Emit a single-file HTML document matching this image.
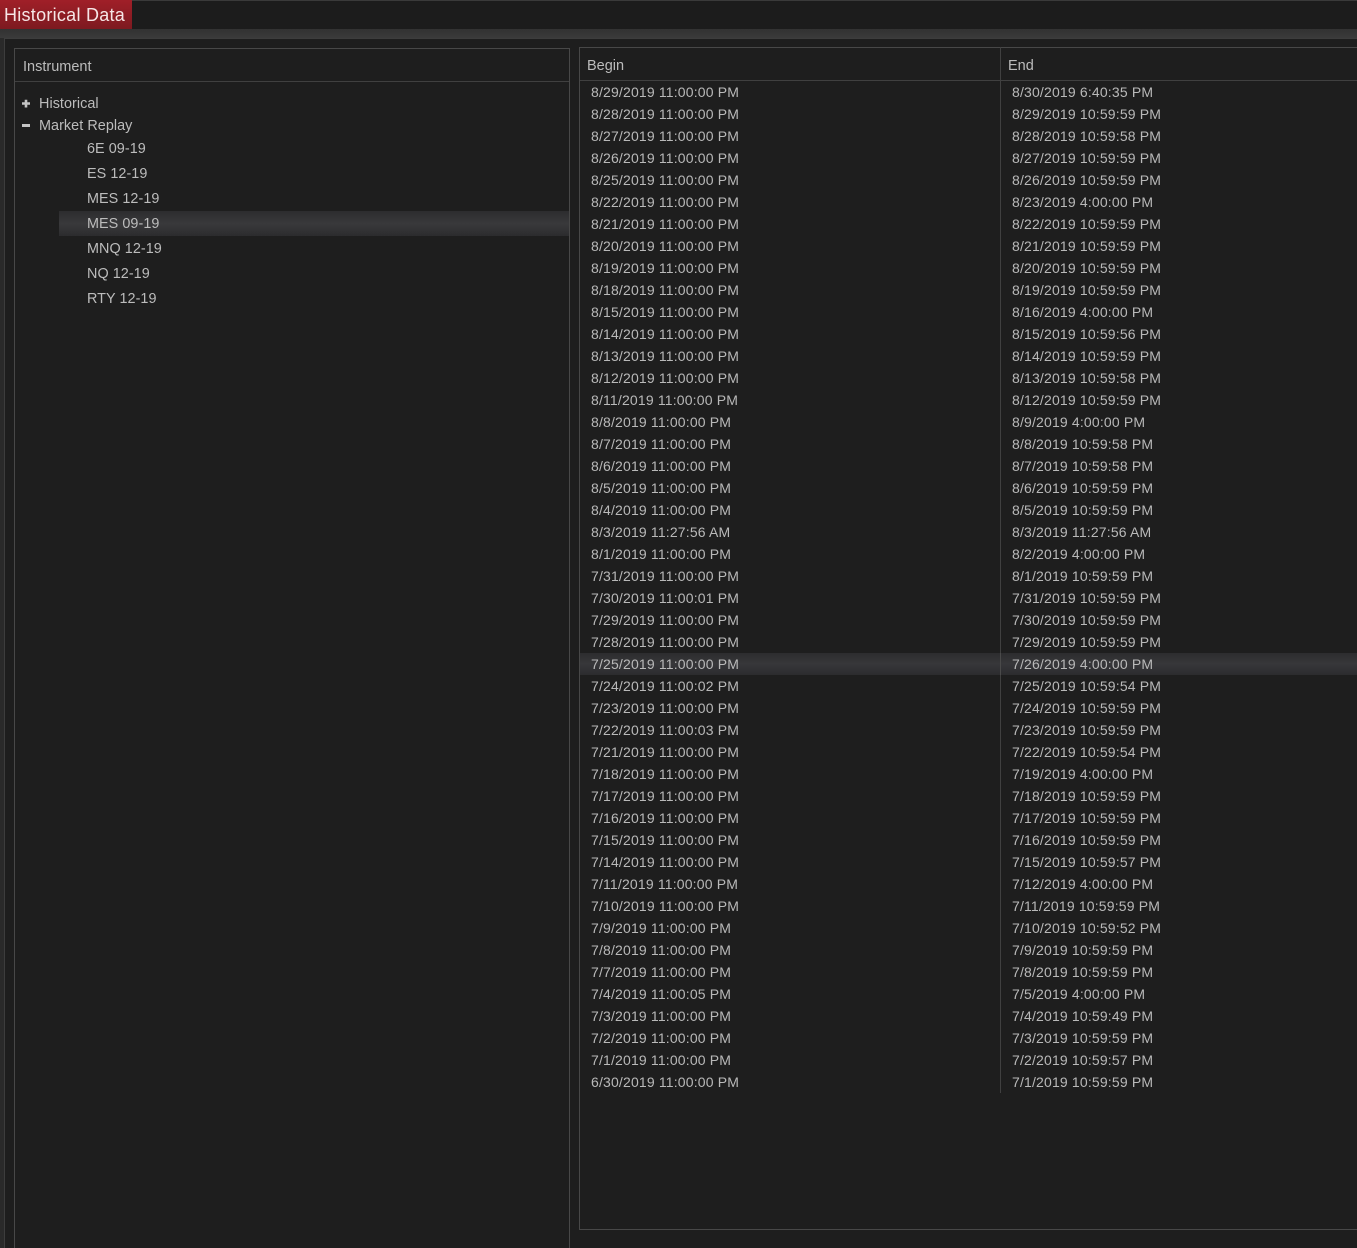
<!DOCTYPE html>
<html><head><meta charset="utf-8">
<style>
html,body{margin:0;padding:0;background:#1e1e1e}
#p{position:relative;width:1357px;height:1248px;overflow:hidden;background:#1e1e1e;font-family:"Liberation Sans",Arial,sans-serif;font-size:14px;color:#b9b9b9}
#p div{position:absolute}
.r{left:579px;width:778px;height:22px;line-height:22px;white-space:nowrap;letter-spacing:.17px}
.r span{position:absolute;top:0}
.r span:first-child{left:12px}
.r span:last-child{left:433px}
.t{left:87px;height:25px;line-height:25px;white-space:nowrap;color:#bcbcbc;font-size:14.4px;letter-spacing:.05px;margin-top:1px}
.h{line-height:22px;white-space:nowrap;color:#bcbcbc;font-size:14.4px;letter-spacing:.05px}
</style></head><body><div id="p">
<div style="left:0;top:0;width:1357px;height:29px;background:#1c1c1c;border-top:1px solid #3a3a3a;box-sizing:border-box"></div>
<div style="left:0;top:0;width:132px;height:29px;background:linear-gradient(#a01f28,#7d1a20);color:#f6e6e6;font-size:18px;line-height:31px;text-indent:4px;letter-spacing:.27px">Historical Data</div>
<div style="left:0;top:29px;width:1357px;height:9px;background:linear-gradient(#323232,#3a3a3a)"></div>
<div style="left:0;top:38px;width:5px;height:1210px;background:#2a2a2a"></div>
<div style="left:4px;top:38px;width:1px;height:1210px;background:#3d3d3d"></div>
<div style="left:5px;top:38px;width:1352px;height:1px;background:#3d3d3d"></div>

<div style="left:14px;top:48px;width:556px;height:1px;background:#484848"></div>
<div style="left:14px;top:48px;width:1px;height:1200px;background:#484848"></div>
<div style="left:569px;top:48px;width:1px;height:1200px;background:#484848"></div>
<div style="left:15px;top:81px;width:554px;height:1px;background:#404040"></div>
<div style="left:23px;top:56px;line-height:22px;color:#bcbcbc;font-size:14.5px">Instrument</div>

<svg style="position:absolute;left:20px;top:97px" width="12" height="13" viewBox="20 97 12 13"><path fill="#c4c4c4" d="M22 102.2h2.7v-2.4h2.6v2.4H30v2.6h-2.7v2.7h-2.6v-2.7H22z"/></svg>
<div class="h" style="left:39px;top:93px">Historical</div>
<div style="left:22px;top:124px;width:8px;height:3px;background:#c4c4c4"></div>
<div class="h" style="left:39px;top:115px">Market Replay</div>
<div style="left:59px;top:211px;width:510px;height:25px;background:linear-gradient(#2c2c2e,#39393b 50%,#2c2c2e)"></div>
<div class="t" style="top:136px">6E 09-19</div>
<div class="t" style="top:161px">ES 12-19</div>
<div class="t" style="top:186px">MES 12-19</div>
<div class="t" style="top:211px">MES 09-19</div>
<div class="t" style="top:236px">MNQ 12-19</div>
<div class="t" style="top:261px">NQ 12-19</div>
<div class="t" style="top:286px">RTY 12-19</div>

<div style="left:579px;top:47px;width:778px;height:1px;background:#484848"></div>
<div style="left:579px;top:47px;width:1px;height:1183px;background:#484848"></div>
<div style="left:579px;top:1229px;width:778px;height:1px;background:#484848"></div>
<div style="left:580px;top:80px;width:777px;height:1px;background:#404040"></div>
<div style="left:1000px;top:47px;width:1px;height:1046px;background:#404040"></div>
<div style="left:587px;top:55px;line-height:22px;color:#bcbcbc;font-size:14.5px">Begin</div>
<div style="left:1008px;top:55px;line-height:22px;color:#bcbcbc;font-size:14.5px">End</div>
<div style="left:580px;top:653px;width:777px;height:22px;background:linear-gradient(#2c2c2e,#37373a 50%,#2c2c2e)"></div>
<div style="left:1000px;top:653px;width:1px;height:22px;background:#4a4a4a"></div>

<div class="r" style="top:81px"><span>8/29/2019 11:00:00 PM</span><span>8/30/2019 6:40:35 PM</span></div>
<div class="r" style="top:103px"><span>8/28/2019 11:00:00 PM</span><span>8/29/2019 10:59:59 PM</span></div>
<div class="r" style="top:125px"><span>8/27/2019 11:00:00 PM</span><span>8/28/2019 10:59:58 PM</span></div>
<div class="r" style="top:147px"><span>8/26/2019 11:00:00 PM</span><span>8/27/2019 10:59:59 PM</span></div>
<div class="r" style="top:169px"><span>8/25/2019 11:00:00 PM</span><span>8/26/2019 10:59:59 PM</span></div>
<div class="r" style="top:191px"><span>8/22/2019 11:00:00 PM</span><span>8/23/2019 4:00:00 PM</span></div>
<div class="r" style="top:213px"><span>8/21/2019 11:00:00 PM</span><span>8/22/2019 10:59:59 PM</span></div>
<div class="r" style="top:235px"><span>8/20/2019 11:00:00 PM</span><span>8/21/2019 10:59:59 PM</span></div>
<div class="r" style="top:257px"><span>8/19/2019 11:00:00 PM</span><span>8/20/2019 10:59:59 PM</span></div>
<div class="r" style="top:279px"><span>8/18/2019 11:00:00 PM</span><span>8/19/2019 10:59:59 PM</span></div>
<div class="r" style="top:301px"><span>8/15/2019 11:00:00 PM</span><span>8/16/2019 4:00:00 PM</span></div>
<div class="r" style="top:323px"><span>8/14/2019 11:00:00 PM</span><span>8/15/2019 10:59:56 PM</span></div>
<div class="r" style="top:345px"><span>8/13/2019 11:00:00 PM</span><span>8/14/2019 10:59:59 PM</span></div>
<div class="r" style="top:367px"><span>8/12/2019 11:00:00 PM</span><span>8/13/2019 10:59:58 PM</span></div>
<div class="r" style="top:389px"><span>8/11/2019 11:00:00 PM</span><span>8/12/2019 10:59:59 PM</span></div>
<div class="r" style="top:411px"><span>8/8/2019 11:00:00 PM</span><span>8/9/2019 4:00:00 PM</span></div>
<div class="r" style="top:433px"><span>8/7/2019 11:00:00 PM</span><span>8/8/2019 10:59:58 PM</span></div>
<div class="r" style="top:455px"><span>8/6/2019 11:00:00 PM</span><span>8/7/2019 10:59:58 PM</span></div>
<div class="r" style="top:477px"><span>8/5/2019 11:00:00 PM</span><span>8/6/2019 10:59:59 PM</span></div>
<div class="r" style="top:499px"><span>8/4/2019 11:00:00 PM</span><span>8/5/2019 10:59:59 PM</span></div>
<div class="r" style="top:521px"><span>8/3/2019 11:27:56 AM</span><span>8/3/2019 11:27:56 AM</span></div>
<div class="r" style="top:543px"><span>8/1/2019 11:00:00 PM</span><span>8/2/2019 4:00:00 PM</span></div>
<div class="r" style="top:565px"><span>7/31/2019 11:00:00 PM</span><span>8/1/2019 10:59:59 PM</span></div>
<div class="r" style="top:587px"><span>7/30/2019 11:00:01 PM</span><span>7/31/2019 10:59:59 PM</span></div>
<div class="r" style="top:609px"><span>7/29/2019 11:00:00 PM</span><span>7/30/2019 10:59:59 PM</span></div>
<div class="r" style="top:631px"><span>7/28/2019 11:00:00 PM</span><span>7/29/2019 10:59:59 PM</span></div>
<div class="r" style="top:653px"><span>7/25/2019 11:00:00 PM</span><span>7/26/2019 4:00:00 PM</span></div>
<div class="r" style="top:675px"><span>7/24/2019 11:00:02 PM</span><span>7/25/2019 10:59:54 PM</span></div>
<div class="r" style="top:697px"><span>7/23/2019 11:00:00 PM</span><span>7/24/2019 10:59:59 PM</span></div>
<div class="r" style="top:719px"><span>7/22/2019 11:00:03 PM</span><span>7/23/2019 10:59:59 PM</span></div>
<div class="r" style="top:741px"><span>7/21/2019 11:00:00 PM</span><span>7/22/2019 10:59:54 PM</span></div>
<div class="r" style="top:763px"><span>7/18/2019 11:00:00 PM</span><span>7/19/2019 4:00:00 PM</span></div>
<div class="r" style="top:785px"><span>7/17/2019 11:00:00 PM</span><span>7/18/2019 10:59:59 PM</span></div>
<div class="r" style="top:807px"><span>7/16/2019 11:00:00 PM</span><span>7/17/2019 10:59:59 PM</span></div>
<div class="r" style="top:829px"><span>7/15/2019 11:00:00 PM</span><span>7/16/2019 10:59:59 PM</span></div>
<div class="r" style="top:851px"><span>7/14/2019 11:00:00 PM</span><span>7/15/2019 10:59:57 PM</span></div>
<div class="r" style="top:873px"><span>7/11/2019 11:00:00 PM</span><span>7/12/2019 4:00:00 PM</span></div>
<div class="r" style="top:895px"><span>7/10/2019 11:00:00 PM</span><span>7/11/2019 10:59:59 PM</span></div>
<div class="r" style="top:917px"><span>7/9/2019 11:00:00 PM</span><span>7/10/2019 10:59:52 PM</span></div>
<div class="r" style="top:939px"><span>7/8/2019 11:00:00 PM</span><span>7/9/2019 10:59:59 PM</span></div>
<div class="r" style="top:961px"><span>7/7/2019 11:00:00 PM</span><span>7/8/2019 10:59:59 PM</span></div>
<div class="r" style="top:983px"><span>7/4/2019 11:00:05 PM</span><span>7/5/2019 4:00:00 PM</span></div>
<div class="r" style="top:1005px"><span>7/3/2019 11:00:00 PM</span><span>7/4/2019 10:59:49 PM</span></div>
<div class="r" style="top:1027px"><span>7/2/2019 11:00:00 PM</span><span>7/3/2019 10:59:59 PM</span></div>
<div class="r" style="top:1049px"><span>7/1/2019 11:00:00 PM</span><span>7/2/2019 10:59:57 PM</span></div>
<div class="r" style="top:1071px"><span>6/30/2019 11:00:00 PM</span><span>7/1/2019 10:59:59 PM</span></div>
</div></body></html>
